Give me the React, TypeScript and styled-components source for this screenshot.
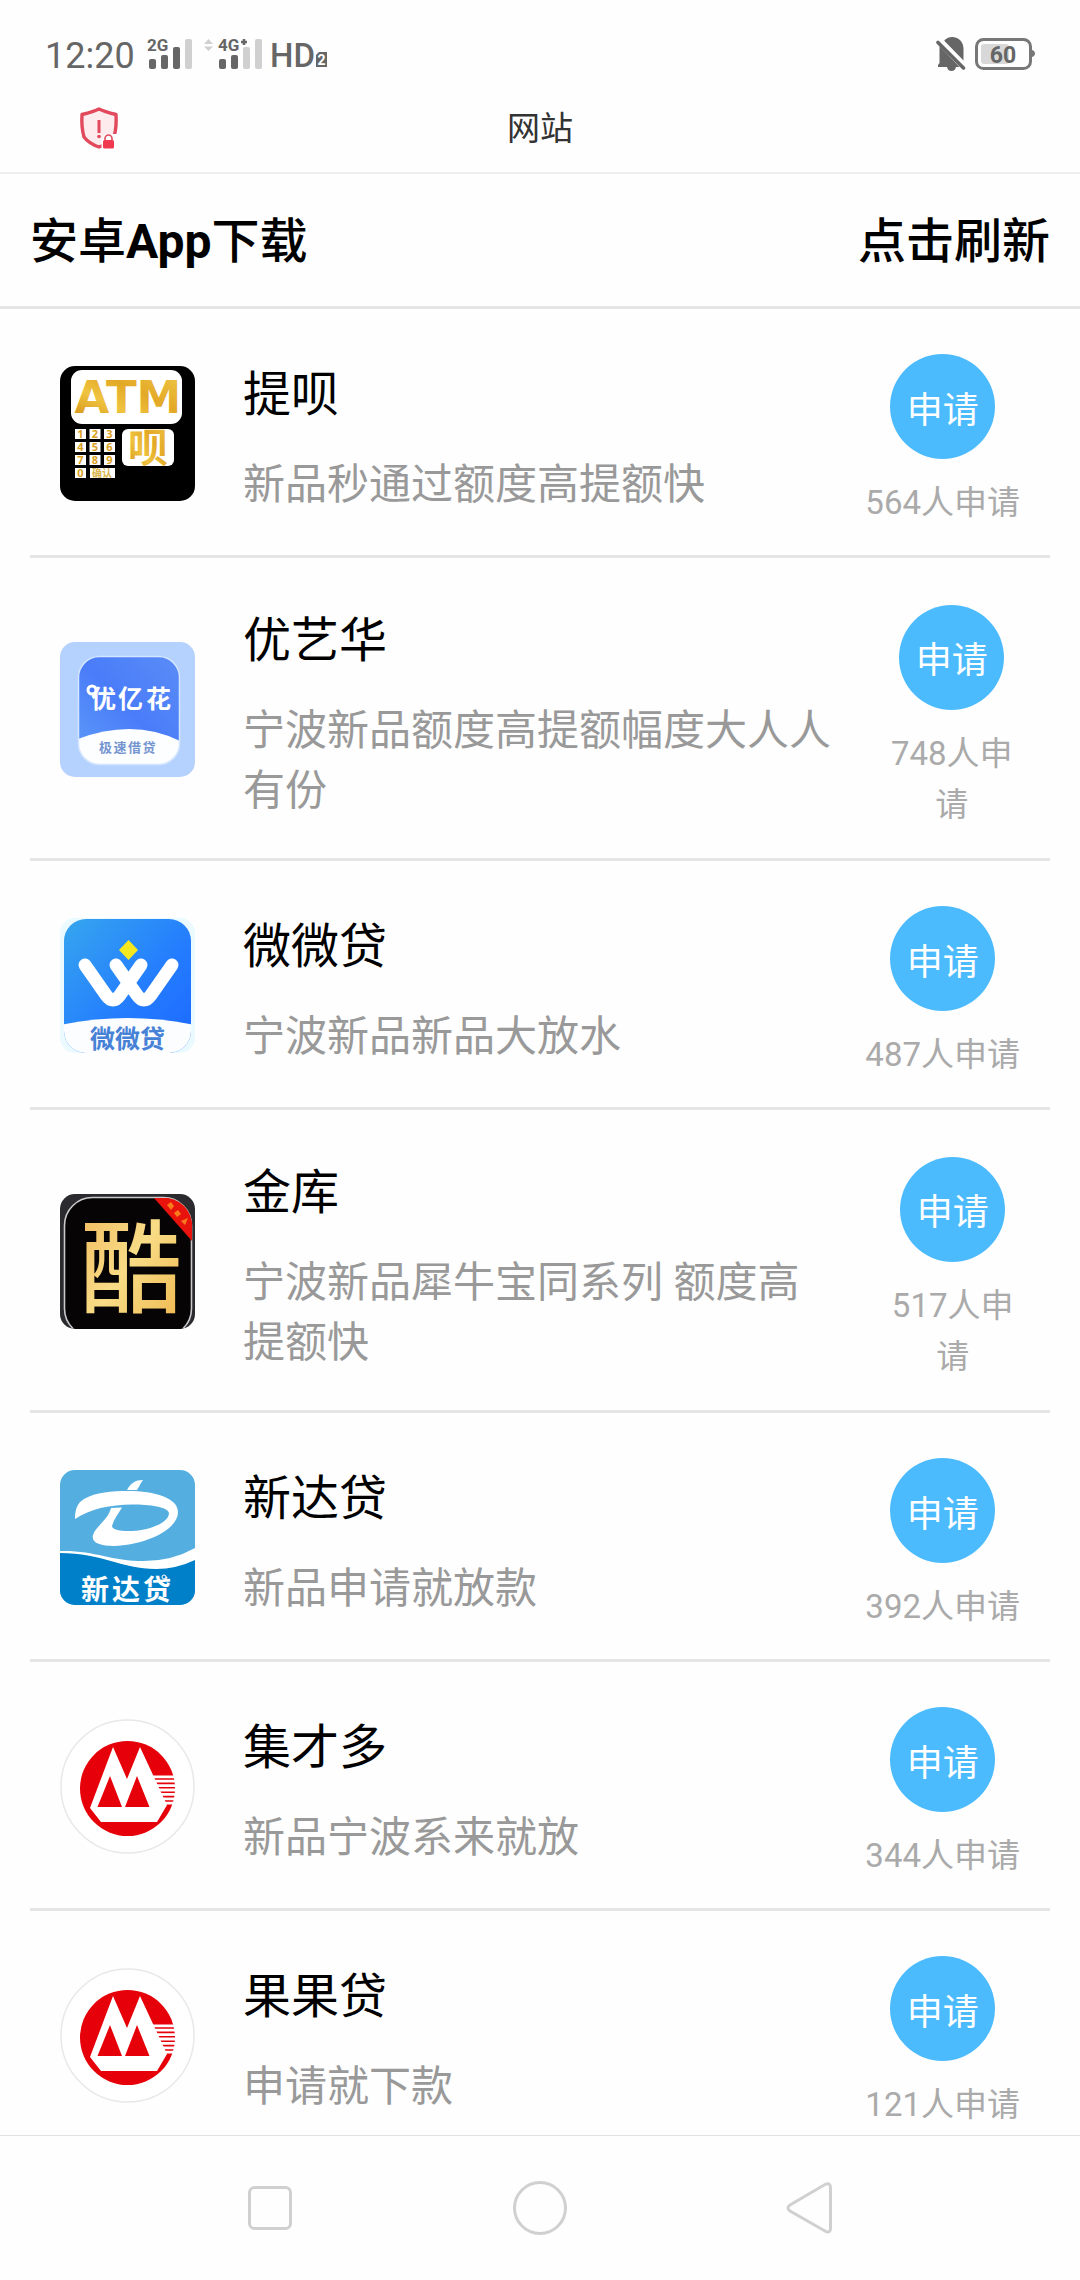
import React, { useState } from 'react';
import styled, { createGlobalStyle } from 'styled-components';

const sans = `Roboto, 'Noto Sans CJK SC', sans-serif`;
const cjk = `'Noto Sans CJK SC', sans-serif`;

const GlobalStyle = createGlobalStyle`
  * { box-sizing: border-box; }
  body { margin: 0; background: #fefefe; font-family: ${sans}; color: #000; }
  h1, h2, p, ul { margin: 0; padding: 0; font-weight: 400; }
  ul { list-style: none; }
  button { font: inherit; color: inherit; border: 0; padding: 0; background: none; cursor: pointer; }
  svg { display: block; overflow: visible; }
`;

const Screen = styled.div`
  display: flex;
  flex-direction: column;
  height: 100vh;
`;

const StatusBar = styled.div`
  display: flex;
  align-items: center;
  justify-content: space-between;
  flex: none;
  height: 84px;
  padding: 24px 45px 0;
  color: #666;
`;

const StatusGroup = styled.div<{ $gap: number }>`
  display: flex;
  align-items: center;
  gap: ${({ $gap }) => $gap}px;
`;

const Clock = styled.time`
  padding-top: 3px;
  font-size: 36px;
  line-height: 42px;
`;

const TitleBar = styled.header`
  display: grid;
  grid-template-columns: 1fr auto 1fr;
  align-items: center;
  flex: none;
  height: 90px;
  padding: 0 78px;
  border-bottom: 2px solid #eee;
`;

const PageTitle = styled.h1`
  padding-top: 2px;
  font-size: 33px;
  line-height: 48px;
  color: #333;
`;

const SectionBar = styled.div`
  display: flex;
  align-items: center;
  justify-content: space-between;
  flex: none;
  height: 135px;
  padding: 3px 30px 0;
  border-bottom: 3px solid #e5e5e5;
  font-size: 48px;
  line-height: 72px;
  font-weight: 500;
`;

const SectionTitle = styled.h2`
  font-size: 48px;
  font-weight: 500;
  b { font-weight: 700; }
`;

const List = styled.ul`
  flex: 1;
  min-height: 0;
  padding: 0 30px;
  overflow-y: auto;
  scrollbar-width: none;
`;

const Row = styled.li`
  display: flex;
  align-items: center;
  gap: 48px;
  padding: 30px;
  box-shadow: inset 0 -3px 0 #e5e5e5;
`;

const Logo = styled.svg`
  flex: none;
  width: 135px;
  height: 135px;
  border-radius: 15px;
  overflow: hidden;
`;

const Info = styled.div`
  flex: 1 1 auto;
  padding: 14px 0 10px;
`;

const Name = styled.p`
  margin-bottom: 21px;
  font-size: 48px;
  line-height: 78px;
`;

const Description = styled.p`
  font-size: 42px;
  line-height: 60px;
  color: #999;
`;

const Action = styled.div`
  display: flex;
  flex-direction: column;
  align-items: center;
  gap: 18px;
  padding-top: 15px;
`;

const ApplyButton = styled.button`
  width: 105px;
  height: 105px;
  border-radius: 50%;
  background: #4cbbfe;
  color: #fff;
  font-size: 36px;
`;

const Count = styled.p`
  font-size: 33px;
  line-height: 51px;
  color: #aaa;
  text-align: center;
`;

const NavBar = styled.nav`
  display: grid;
  grid-template-columns: repeat(3, 1fr);
  place-items: center;
  flex: none;
  height: 145px;
  padding: 0 12.5%;
  border-top: 1px solid #e2e2e2;
`;

const Signals = () => (
  <svg width="180" height="34" viewBox="147 37 180 34" fill="#666" role="img" aria-label="2G 4G+ HD 2">
    <text x="147" y="51" fontFamily="Roboto, sans-serif" fontWeight="700" fontSize="17">2G</text>
    <rect x="149" y="59" width="7" height="10" rx="2" />
    <rect x="161" y="55" width="7" height="14" rx="2" />
    <rect x="173" y="47" width="7" height="22" rx="2" />
    <rect x="185" y="39" width="7" height="30" rx="2" fill="#d0d0d0" />
    <path d="M204 44 208.500 39 213 44ZM204 46.500H213L208.500 51Z" fill="#d0d0d0" />
    <rect x="243" y="47" width="7" height="22" rx="2" fill="#d0d0d0" />
    <rect x="255" y="39" width="7" height="30" rx="2" fill="#d0d0d0" />
    <text x="218" y="51" fontFamily="Roboto, sans-serif" fontWeight="700" fontSize="17">4G</text>
    <path d="M241 42H247M244 39V45" stroke="#666" strokeWidth="2.500" />
    <rect x="219" y="59" width="7" height="10" rx="2" />
    <rect x="231" y="55" width="7" height="14" rx="2" />
    <text x="270" y="67" fontFamily="Roboto, sans-serif" fontWeight="500" fontSize="33">HD</text>
    <path d="M319 52H327V67H316V55Z" />
    <text x="317.500" y="64.500" fontFamily="Roboto, sans-serif" fontWeight="700" fontSize="14" fill="#fff">2</text>
  </svg>
);

const MutedBell = () => (
  <svg width="30" height="34" viewBox="0 0 30 34" fill="#666" role="img" aria-label="静音">
    <path d="M8 4C10 1.500 13 0 16 0C23 0 27.500 5 27.500 12V24Z" />
    <path d="M3.500 9 23.500 30H20C19.500 32.500 18 34 15.500 34C13 34 11.500 32.500 11 30H2V28L3.500 26Z" />
    <path d="M2 5.500 27.500 31" stroke="#666" strokeWidth="3.600" strokeLinecap="round" />
    <path d="M6 3.500 28.500 26.500" stroke="#fefefe" strokeWidth="2.600" />
  </svg>
);

const Battery = () => (
  <svg width="60" height="34" viewBox="0 0 60 34" role="img" aria-label="60%">
    <rect x="1.500" y="2.500" width="54" height="29" rx="7" fill="none" stroke="#777" strokeWidth="3" />
    <path d="M57 13C61 14 61 19 57 20Z" fill="#777" />
    <rect x="6" y="7" width="28" height="20" rx="3" fill="#d8d8d8" />
    <text x="28" y="25.500" textAnchor="middle" fontFamily="Roboto, sans-serif" fontWeight="700" fontSize="23" fill="#666">60</text>
  </svg>
);

const ShieldWarning = () => (
  <svg width="42" height="44" viewBox="0 0 42 44" role="img" aria-label="不安全">
    <path d="M21 3C26 5.500 32 7 38 8.500C38.500 17 38 24 36 31C33 35 27 39 21 41C15 39 9 35 6 31C4 24 3.500 17 4 8.500C10 7 16 5.500 21 3Z" fill="#fdebed" stroke="#e2495c" strokeWidth="3.400" strokeLinejoin="round" />
    <path d="M21 14V27" stroke="#e2495c" strokeWidth="3" />
    <circle cx="21" cy="30.500" r="1.800" fill="#e2495c" />
    <path d="M23.500 43V33.500L27 28H40V43Z" fill="#fefefe" />
    <rect x="25" y="34" width="11" height="8.500" rx="1.500" fill="#f0394f" />
    <path d="M27 34V32.500A3.500 3.500 0 0 1 34 32.500V34" fill="none" stroke="#e2495c" strokeWidth="1.600" />
  </svg>
);

const keys = ['1', '2', '3', '4', '5', '6', '7', '8', '9', '0'];

const AtmLogo = () => (
  <Logo viewBox="0 0 135 135" aria-hidden>
    <defs>
      <linearGradient id="gold" x1="0" y1="1" x2="1" y2="0">
        <stop offset="0" stopColor="#d18a12" />
        <stop offset="0.350" stopColor="#efc340" />
        <stop offset="0.600" stopColor="#e3a926" />
        <stop offset="1" stopColor="#f0c84a" />
      </linearGradient>
    </defs>
    <rect width="135" height="135" fill="#000" />
    <rect x="11" y="4" width="111" height="54" rx="11" fill="#fff" />
    <text x="68" y="47" textAnchor="middle" fontFamily="'DejaVu Sans', sans-serif" fontWeight="700" fontSize="45" fill="url(#gold)">ATM</text>
    {keys.map((key, i) => {
      const x = 15 + (i % 3) * 14.5;
      const y = 63 + Math.floor(i / 3) * 13;
      return (
        <g key={key}>
          <rect x={x} y={y} width="11" height="10" fill="#fff" />
          <text x={x + 5.5} y={y + 9} textAnchor="middle" fontFamily="'Noto Sans', sans-serif" fontWeight="700" fontSize="11" fill="#dba021">{key}</text>
        </g>
      );
    })}
    <rect x="30" y="102" width="25" height="10" fill="#fff" />
    <text x="42" y="111" textAnchor="middle" fontFamily={cjk} fontWeight="700" fontSize="10" fill="#d8b44c">确认</text>
    <rect x="62" y="63" width="52" height="37" rx="6" fill="#fff" />
    <text x="88" y="96" textAnchor="middle" fontFamily={cjk} fontWeight="700" fontSize="40" fill="url(#gold)">呗</text>
  </Logo>
);

const YouyiLogo = () => (
  <Logo viewBox="0 0 135 135" aria-hidden>
    <defs>
      <linearGradient id="youyi" x1="0" y1="1" x2="1" y2="0">
        <stop offset="0" stopColor="#5f9df8" />
        <stop offset="0.500" stopColor="#4a7cf9" />
        <stop offset="1" stopColor="#5a8df6" />
      </linearGradient>
      <clipPath id="youyiCard"><rect x="18" y="14" width="102" height="109" rx="22" /></clipPath>
    </defs>
    <rect width="135" height="135" fill="#b5d1fd" />
    <g clipPath="url(#youyiCard)">
      <rect x="18" y="14" width="102" height="109" fill="url(#youyi)" />
      <path d="M18 97Q44 87 69 87Q96 87 120 99V124H18Z" fill="#fdfeff" />
    </g>
    <rect x="18.500" y="14.500" width="101" height="108" rx="21" fill="none" stroke="#d3e6fe" strokeWidth="1.500" />
    <text x="31 58 86" y="66" fontFamily={cjk} fontWeight="700" fontSize="25" fill="#fff">优亿花</text>
    <circle cx="32" cy="48" r="4" fill="#4a7cf9" stroke="#fff" strokeWidth="3" />
    <text x="39 53.500 68 82.500" y="110" fontFamily={cjk} fontWeight="700" fontSize="13" fill="#7595cf">极速借贷</text>
  </Logo>
);

const WeiweiLogo = () => (
  <Logo viewBox="0 0 135 135" aria-hidden>
    <defs>
      <linearGradient id="weiwei" x1="0" y1="0" x2="1" y2="1">
        <stop offset="0" stopColor="#36a6ee" />
        <stop offset="0.600" stopColor="#237bff" />
        <stop offset="1" stopColor="#1d68ff" />
      </linearGradient>
      <clipPath id="weiweiCard"><rect x="4" y="1" width="127" height="134" rx="22" /></clipPath>
    </defs>
    <rect width="135" height="135" fill="#eafaff" />
    <g clipPath="url(#weiweiCard)">
      <rect x="4" width="127" height="135" fill="url(#weiwei)" />
      <path d="M0 107Q68 93 135 107V135H0Z" fill="#fbfdff" />
    </g>
    <path d="M68.500 22 78 32 68.500 42 59 32Z" fill="#f6e81e" />
    <path d="M25 47 46 77Q53 87 60 77L81 47M56 47 77 77Q84 87 91 77L112 47" fill="none" stroke="#fff" strokeWidth="13" strokeLinecap="round" strokeLinejoin="round" />
    <text x="30 55 80" y="130" fontFamily={cjk} fontWeight="700" fontSize="25" fill="#4681d6">微微贷</text>
  </Logo>
);

const KuLogo = () => (
  <Logo viewBox="0 0 135 135" aria-hidden>
    <defs>
      <linearGradient id="ku" x1="0" y1="0" x2="1" y2="1">
        <stop offset="0" stopColor="#f1b65a" />
        <stop offset="0.500" stopColor="#f8dc86" />
        <stop offset="1" stopColor="#eeb44a" />
      </linearGradient>
    </defs>
    <rect width="135" height="135" fill="#2b2a2e" />
    <rect x="4.500" y="3.500" width="127" height="139" rx="28" fill="#060405" stroke="#c9c9cc" strokeWidth="1.600" />
    <path d="M94 4H108Q128 8 132 28V47Z" fill="#e8130d" />
    <g fill="#fb7a1c">
      <path d="M107 11 111 8 114 12 111 16Z" />
      <path d="M114 19 118 16 121 20 117 23Z" />
      <path d="M121 27 128 24 125 31Z" />
    </g>
    <text x="71" y="111" textAnchor="middle" fontFamily={cjk} fontWeight="500" fontSize="101" fill="url(#ku)">酷</text>
  </Logo>
);

const XindaLogo = () => (
  <Logo viewBox="0 0 135 135" aria-hidden>
    <rect width="135" height="135" fill="#55aee0" />
    <path d="M0 82C40 82 60 100 102 98Q122 95 135 86V135H0Z" fill="#0080c8" />
    <path d="M0 81C34 80 50 91 84 91Q112 91 135 78V90Q116 99 96 99C62 99 42 83 0 83Z" fill="#fff" />
    <path d="M67 20C71 13 75 10 83 10C80 14 79 17 77 20Z" fill="#fff" />
    <path d="M15 49C15 40 17 33 24 29C36 22 52 21 68 21C95 21 118 28 118 42C118 60 85 75 54 76C40 76 31 73 33 65C36 56 48 50 51 38L62 37.500C58 44 54 49 52 56C52 60 62 61.500 72 61C92 60 109 52 109 43C108 37 90 34.500 72 34.500C50 35 32 38 15 49Z" fill="#fff" />
    <text x="21 52 83" y="130" fontFamily={cjk} fontWeight="700" fontSize="28" fill="#fff">新达贷</text>
    <circle cx="104" cy="107" r="2" fill="#0080c8" stroke="#fff" />
  </Logo>
);

const stripes = [57.8, 62.2, 66.6, 71, 75.4, 79.8, 84.2];

const MerchantsLogo = () => (
  <Logo viewBox="0 0 135 135" aria-hidden>
    <circle cx="67.500" cy="67.500" r="66.500" fill="#fff" stroke="#e8e8e8" strokeWidth="1.500" />
    <circle cx="67.500" cy="69.500" r="47.500" fill="#e60009" />
    <path d={stripes.map((y) => `M92 ${y}H117`).join('')} stroke="#fff" strokeWidth="2.800" />
    <path d="M53 28 67 60 80 28 107 86 97 103H41L30 89Z" fill="#fff" />
    <path d="M50 57 62 88H37.500ZM77 57 89.500 88H65Z" fill="#e60009" />
  </Logo>
);

const products = [
  { name: '提呗', description: '新品秒通过额度高提额快', count: 564, Icon: AtmLogo },
  { name: '优艺华', description: '宁波新品额度高提额幅度大人人有份', count: 748, Icon: YouyiLogo },
  { name: '微微贷', description: '宁波新品新品大放水', count: 487, Icon: WeiweiLogo },
  { name: '金库', description: '宁波新品犀牛宝同系列 额度高提额快', count: 517, Icon: KuLogo },
  { name: '新达贷', description: '新品申请就放款', count: 392, Icon: XindaLogo },
  { name: '集才多', description: '新品宁波系来就放', count: 344, Icon: MerchantsLogo },
  { name: '果果贷', description: '申请就下款', count: 121, Icon: MerchantsLogo },
];

export default function App() {
  const [, setRefreshes] = useState(0);
  return (
    <>
      <GlobalStyle />
      <Screen lang="zh-CN">
        <StatusBar>
          <StatusGroup $gap={12}>
            <Clock>12:20</Clock>
            <Signals />
          </StatusGroup>
          <StatusGroup $gap={9}>
            <MutedBell />
            <Battery />
          </StatusGroup>
        </StatusBar>
        <TitleBar>
          <ShieldWarning />
          <PageTitle>网站</PageTitle>
        </TitleBar>
        <SectionBar>
          <SectionTitle>安卓<b>App</b>下载</SectionTitle>
          <button type="button" onClick={() => setRefreshes((n) => n + 1)}>点击刷新</button>
        </SectionBar>
        <List>
          {products.map(({ name, description, count, Icon }) => (
            <Row key={name}>
              <Icon />
              <Info>
                <Name>{name}</Name>
                <Description>{description}</Description>
              </Info>
              <Action>
                <ApplyButton type="button">申请</ApplyButton>
                <Count>{`${count}人申请`}</Count>
              </Action>
            </Row>
          ))}
        </List>
        <NavBar>
          <button type="button" aria-label="最近任务">
            <svg width="54" height="54" viewBox="0 0 54 54" fill="none" stroke="#d0d0d0" strokeWidth="3">
              <rect x="6.500" y="6.500" width="41" height="41" rx="5" />
            </svg>
          </button>
          <button type="button" aria-label="主页">
            <svg width="54" height="54" viewBox="0 0 54 54" fill="none" stroke="#d0d0d0" strokeWidth="3">
              <circle cx="27" cy="27" r="25.500" />
            </svg>
          </button>
          <button type="button" aria-label="返回">
            <svg width="54" height="54" viewBox="0 0 54 54" fill="none" stroke="#d0d0d0" strokeWidth="3">
              <path d="M42 3.500Q47.500 1 47.500 7V47Q47.500 53 42 50L7 30Q3 27 7 24Z" />
            </svg>
          </button>
        </NavBar>
      </Screen>
    </>
  );
}
